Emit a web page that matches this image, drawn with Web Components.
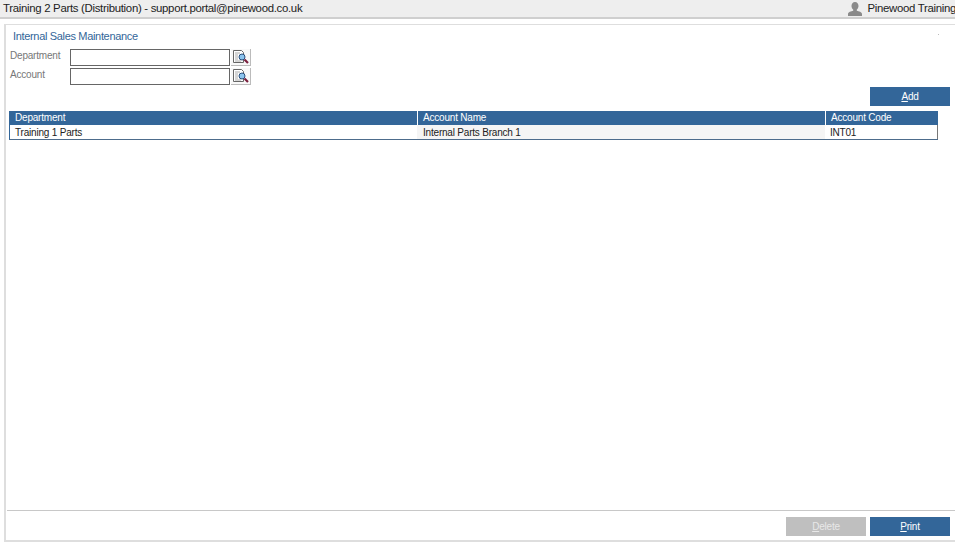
<!DOCTYPE html>
<html>
<head>
<meta charset="utf-8">
<style>
  html, body { margin: 0; height: 100%; background: #fff; }
  body { display: flex; flex-direction: column; height: 545px; overflow: hidden; font: 10px "Liberation Sans", sans-serif; letter-spacing: -0.2px; }
</style>
</head>
<body>
<template id="lookup-tpl">
  <style>
    :host { display: flex; align-items: flex-start; height: 19px; color: #777; }
    label { width: 60px; line-height: 13px; }
    .box { width: 158px; height: 15px; border: 1px solid #666; background: #fff; }
    button { width: 20px; height: 17px; margin-left: 1px; padding: 0; border: 0; border-right: 1px solid #bbb; border-bottom: 1px solid #bbb; background: #f8f8f8; display: flex; }
  </style>
  <label><slot></slot></label>
  <div class="box"></div>
  <button>
    <svg width="19" height="16" viewBox="0 0 19 16">
      <path d="M2.500 1.500h8l2 2v10h-10z" fill="#fff" stroke="#666"/>
      <path d="M4 4h5M4 6h3M4 8h3M4 10h3M4 12h6" stroke="#aaa"/>
      <circle cx="11" cy="8" r="3" fill="#8cc4ee" stroke="#2a4f7c"/>
      <path d="M13.500 10.500l3.500 3.500" stroke="#7a1f3d" stroke-width="2.200"/>
    </svg>
  </button>
</template>

<template id="action-tpl">
  <style>
    :host { display: block; }
    button { display: block; width: 80px; height: 19px; padding: 0; border: 0; background: #336699; color: #fff; font: inherit; letter-spacing: inherit; }
    :host([disabled]) button { background: #bfbfbf; color: #e8e8e8; }
    ::slotted(u) { text-decoration: underline; }
  </style>
  <button><slot></slot></button>
</template>

<template id="bar-tpl">
  <style>
    :host { display: flex; justify-content: space-between; flex: none; height: 17px; padding-left: 3px; background: #eeeeee; border-bottom: 2px solid #cfcfcf; font: 11.4px/17px "Liberation Sans", sans-serif; letter-spacing: -0.3px; color: #222; white-space: nowrap; overflow: hidden; }
    .user { display: flex; align-items: center; gap: 5px; margin-right: -1px; }
  </style>
  <div>Training 2 Parts (Distribution) - support.portal@pinewood.co.uk</div>
  <div class="user">
    <svg width="14" height="14" viewBox="0 0 14 14"><path d="M7 0c2.200 0 3.500 1.700 3.500 4 0 1.500-.7 2.900-1.700 3.600v1.200c2 .6 5.200 1.300 5.200 3.200v2H0v-2c0-1.900 3.200-2.600 5.200-3.200V7.600C4.200 6.900 3.500 5.500 3.500 4 3.500 1.700 4.800 0 7 0z" fill="#8a8a8a"/></svg>
    <span>Pinewood Training</span>
  </div>
</template>

<template id="grid-tpl">
  <style>
    :host { display: block; width: 929px; border-bottom: 1px solid #4d6c8c; border-left: 1px solid #336699; box-sizing: border-box; color: #222; }
    .row { display: grid; grid-template-columns: 407px 408px 1fr; grid-template-rows: 14px; line-height: 13px; white-space: nowrap; }
    .head { background: #336699; color: #fff; }
    .head span { border-left: 1px solid #fff; padding-left: 5px; }
    .head span:first-child { border-left: 0; }
    .body { border-right: 1px solid #777; line-height: 15px; }
    .body span { padding-left: 6px; }
    .body span:first-child { padding-left: 5px; }
    .body span:last-child { padding-left: 5px; }
    .body span:nth-child(2) { background: #f5f5f5; }
  </style>
  <div class="row head"><span>Department</span><span>Account Name</span><span>Account Code</span></div>
  <div class="row body"><span>Training 1 Parts</span><span>Internal Parts Branch 1</span><span>INT01</span></div>
</template>

<template id="panel-tpl">
  <style>
    :host { position: relative; display: flex; flex-direction: column; flex: none; height: 518px; margin: 5px 0 0 4px; border: 2px solid #dedede; border-right: 0; border-top-width: 1px; box-sizing: border-box; }
    h1 { margin: 0; padding: 5px 0 0 7px; height: 19px; font: inherit; font-size: 11px; letter-spacing: -0.33px; line-height: 13px; color: #336699; box-sizing: content-box; }
    .speck { position: absolute; left: 932px; top: 9px; width: 1px; height: 1px; background: #bbb; }
    .form { padding-left: 4px; height: 39px; }
    .add { display: flex; justify-content: flex-end; padding-right: 5px; height: 24px; margin-top: -1px; }
    .grid { padding-left: 3px; flex: 1; }
    .foot { display: flex; justify-content: flex-end; gap: 4px; height: 30px; box-sizing: border-box; margin-left: 1px; padding: 6px 5px 0 0; border-top: 1px solid #c8c8c8; }
  </style>
  <h1>Internal Sales Maintenance</h1>
  <i class="speck"></i>
  <div class="form">
    <lookup-field>Department</lookup-field>
    <lookup-field>Account</lookup-field>
  </div>
  <div class="add"><action-button><u>A</u>dd</action-button></div>
  <div class="grid"><sales-grid></sales-grid></div>
  <div class="foot">
    <action-button disabled><u>D</u>elete</action-button>
    <action-button><u>P</u>rint</action-button>
  </div>
</template>

<title-bar></title-bar>
<sales-panel></sales-panel>

<script>
  // all elements are the same: clone the template into an open shadow root
  function define(name, tplId) {
    customElements.define(name, class extends HTMLElement {
      constructor() {
        super();
        this.attachShadow({ mode: "open" });
        this.shadowRoot.appendChild(document.getElementById(tplId).content.cloneNode(true));
      }
    });
  }
  define("lookup-field", "lookup-tpl");
  define("action-button", "action-tpl");
  define("title-bar", "bar-tpl");
  define("sales-grid", "grid-tpl");
  define("sales-panel", "panel-tpl");
</script>
</body>
</html>
